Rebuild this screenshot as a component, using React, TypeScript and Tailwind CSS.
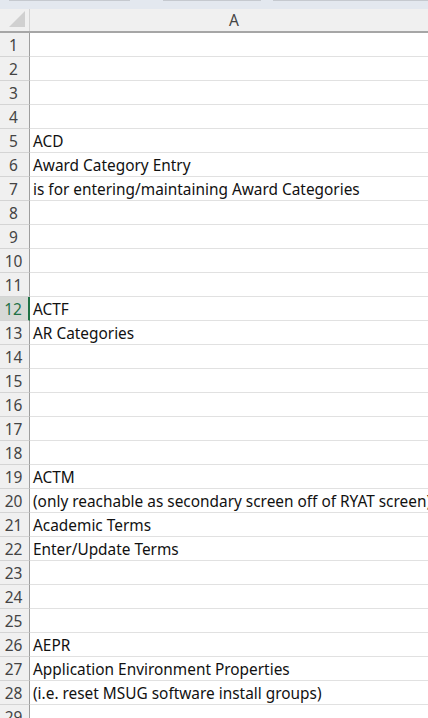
import React from "react";

const content: Record<number, string> = {
  5: "ACD",
  6: "Award Category Entry",
  7: "is for entering/maintaining Award Categories",
  12: "ACTF",
  13: "AR Categories",
  19: "ACTM",
  20: "(only reachable as secondary screen off of RYAT screen)",
  21: "Academic Terms",
  22: "Enter/Update Terms",
  26: "AEPR",
  27: "Application Environment Properties",
  28: "(i.e. reset MSUG software install groups)",
};

export default function App() {
  const rows = Array.from({ length: 29 }, (_, i) => i + 1);
  return (
    <div
      className="w-[428px] h-[718px] overflow-hidden bg-white"
      style={{ fontFamily: '"Noto Sans", "Open Sans", sans-serif' }}
    >
      {/* top strip */}
      <div className="h-[9px] bg-[#e3e8ef] flex items-start">
        <div className="ml-[9px] w-[121px] h-[1px] bg-[#c5c9cf]" />
        <div className="ml-[33px] w-[98px] h-[1px] bg-[#c5c9cf]" />
        <div className="ml-[12px] flex-1 h-[1px] bg-[#c5c9cf]" />
      </div>
      {/* column header */}
      <div className="flex h-[24px] bg-[#f0f0f0] border-b-[2px] border-[#a6a6a6]">
        <div className="w-[30px] shrink-0 border-r border-[#d4d4d4] flex items-end justify-end pr-[4px] pb-[4px]">
          <svg width="16" height="16" viewBox="0 0 16 16">
            <polygon points="16,0 16,16 0,16" fill="#d0d0d0" />
          </svg>
        </div>
        <div className="w-[408px] shrink-0 flex items-center justify-center pt-[1px] text-[15.5px] text-[#444]">
          A
        </div>
      </div>
      {rows.map((r) => {
        const active = r === 12;
        return (
          <div key={r} className="flex h-[24px]">
            <div
              className={
                active
                  ? "w-[30px] shrink-0 bg-[#d6d9d6] border-r-[2px] border-[#1e7145] border-b border-b-[#d4d4d4] flex items-center justify-center pr-[2px] pt-[2px] text-[15.5px] text-[#1e7145]"
                  : "w-[30px] shrink-0 bg-[#f0f0f0] border-r border-[#9e9e9e] border-b border-b-[#d4d4d4] flex items-center justify-center pr-[2px] pt-[2px] text-[15.5px] text-[#444]"
              }
            >
              {r}
            </div>
            <div className="w-[408px] shrink-0 border-b border-[#e1e1e1] flex items-center pl-[3px] pt-[2px] text-[15.4px] text-[#111] whitespace-nowrap overflow-hidden">
              {content[r] ?? ""}
            </div>
          </div>
        );
      })}
    </div>
  );
}
